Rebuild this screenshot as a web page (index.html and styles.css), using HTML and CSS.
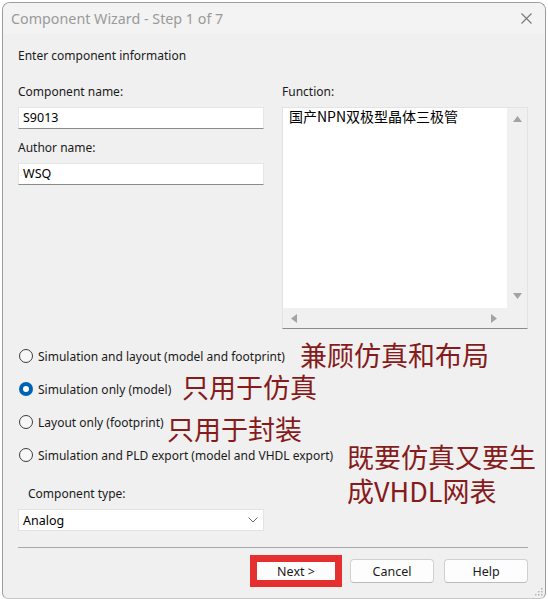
FILE: index.html
```html
<!DOCTYPE html>
<html>
<head>
<meta charset="utf-8">
<link rel="stylesheet" href="styles.css">
</head>
<body>
<div class="window">
  <div class="titlebar">
    <span class="title">Component Wizard - Step 1 of 7</span>
    <svg class="close" width="11" height="11" viewBox="0 0 11 11"><path d="M0.5 0.5 L10.5 10.5 M10.5 0.5 L0.5 10.5" stroke="#777" stroke-width="1.1" fill="none"/></svg>
  </div>
  <div class="content">
    <div class="intro">Enter component information</div>
    <div class="cols">
      <div class="col">
        <div class="label">Component name:</div>
        <div class="input">S9013</div>
        <div class="label second">Author name:</div>
        <div class="input">WSQ</div>
      </div>
      <div class="col">
        <div class="label">Function:</div>
        <div class="textarea">
          <div class="ta-main">
            <div class="ta-text">国产NPN双极型晶体三极管</div>
            <div class="vscroll">
              <svg width="9" height="6" viewBox="0 0 9 6"><path d="M0 6 L4.5 0 L9 6 Z" fill="#a3a3a3"/></svg>
              <svg width="9" height="6" viewBox="0 0 9 6"><path d="M0 0 L9 0 L4.5 6 Z" fill="#a3a3a3"/></svg>
            </div>
          </div>
          <div class="hscroll">
            <div class="hbar">
              <svg width="6" height="9" viewBox="0 0 6 9"><path d="M6 0 L6 9 L0 4.5 Z" fill="#a3a3a3"/></svg>
              <svg width="6" height="9" viewBox="0 0 6 9"><path d="M0 0 L6 4.5 L0 9 Z" fill="#a3a3a3"/></svg>
            </div>
            <div class="corner"></div>
          </div>
        </div>
      </div>
    </div>
    <div class="options">
      <div class="radio-row"><span class="radio"></span><span>Simulation and layout (model and footprint)</span></div>
      <div class="radio-row"><span class="radio checked"></span><span>Simulation only (model)</span></div>
      <div class="radio-row"><span class="radio"></span><span>Layout only (footprint)</span></div>
      <div class="radio-row"><span class="radio"></span><span>Simulation and PLD export (model and VHDL export)</span></div>
    </div>
    <div class="type-label">Component type:</div>
    <div class="select">
      <span>Analog</span>
      <svg width="10" height="6" viewBox="0 0 10 6"><path d="M0.5 0.5 L5 5 L9.5 0.5" stroke="#666" stroke-width="1" fill="none"/></svg>
    </div>
    <div class="separator"></div>
    <div class="buttons">
      <div class="btn next">Next &gt;</div>
      <div class="btn">Cancel</div>
      <div class="btn">Help</div>
    </div>
  </div>
  <div class="note note1">兼顾仿真和布局</div>
  <div class="note note2">只用于仿真</div>
  <div class="note note3">只用于封装</div>
  <div class="note note4">
    <div class="note-line">既要仿真又要生</div>
    <div class="note-line">成VHDL网表</div>
  </div>
  <svg class="grip" width="8" height="8" viewBox="0 0 8 8"><g fill="#b5b5b5"><rect x="6" y="0" width="1.5" height="1.5"/><rect x="3" y="3" width="1.5" height="1.5"/><rect x="6" y="3" width="1.5" height="1.5"/><rect x="0" y="6" width="1.5" height="1.5"/><rect x="3" y="6" width="1.5" height="1.5"/><rect x="6" y="6" width="1.5" height="1.5"/></g></svg>
</div>
</body>
</html>
```

FILE: styles.css
```css
html, body {
  margin: 0;
  padding: 0;
  background: #ffffff;
}
body {
  font-family: "Noto Sans", "Noto Sans CJK SC", sans-serif;
  font-size: 12px;
  color: #1a1a1a;
}
.window {
  position: relative;
  box-sizing: border-box;
  margin: 2px 0 0 2px;
  width: 544px;
  height: 597px;
  background: #f0f0f0;
  border: 1px solid #9c9c9c;
  border-bottom-color: #c8c8c8;
  border-radius: 8px 8px 6px 6px;
  overflow: hidden;
}
.titlebar {
  height: 31px;
  display: flex;
  align-items: center;
  justify-content: space-between;
  padding: 0 13px 0 8px;
  background: #f3f3f3;
}
.title {
  font-size: 14.3px;
  color: #9a9a9a;
}
.close {
  display: block;
}
.content {
  padding: 14px 16px 0 15px;
}
.intro {
  line-height: 16px;
  height: 16px;
}
.cols {
  display: flex;
  gap: 18px;
  margin-top: 20px;
}
.col {
  width: 246px;
  display: flex;
  flex-direction: column;
}
.label {
  line-height: 16px;
  height: 16px;
  margin-bottom: 7px;
}
.label.second {
  margin-top: 11px;
}
.input {
  box-sizing: border-box;
  height: 22px;
  background: #ffffff;
  border: 1px solid #e6e6e6;
  border-bottom: 1px solid #8c8c8c;
  padding: 0 4px;
  line-height: 20px;
  font-size: 12.5px;
  color: #000;
}
.textarea {
  box-sizing: border-box;
  height: 222px;
  display: flex;
  flex-direction: column;
  border: 1px solid #e3e3e3;
  border-bottom: 1px solid #8c8c8c;
  background: #f0f0f0;
}
.ta-main {
  flex: 1;
  display: flex;
}
.ta-text {
  flex: 1;
  background: #ffffff;
  padding: 0 6px;
  font-family: "Noto Sans CJK SC", sans-serif;
  font-size: 14px;
  line-height: 17px;
  color: #000;
}
.vscroll {
  width: 20px;
  display: flex;
  flex-direction: column;
  justify-content: space-between;
  align-items: center;
  padding: 8px 0 9px;
  background: #f0f0f0;
}
.vscroll svg, .hbar svg {
  display: block;
}
.hscroll {
  height: 20px;
  display: flex;
}
.hbar {
  flex: 1;
  display: flex;
  justify-content: space-between;
  align-items: center;
  padding: 0 10px 0 8px;
}
.corner {
  width: 20px;
}
.options {
  margin-top: 17px;
  display: flex;
  flex-direction: column;
  gap: 13px;
}
.radio-row {
  height: 20px;
  display: flex;
  align-items: center;
  gap: 5px;
}
.radio {
  box-sizing: border-box;
  width: 14px;
  height: 14px;
  border-radius: 50%;
  border: 1px solid #3c3c3c;
  background: #f7f7f7;
  margin-left: 1px;
  position: relative;
}
.radio.checked {
  border: none;
  background: #0063b1;
}
.radio.checked::after {
  content: "";
  position: absolute;
  left: 4px;
  top: 4px;
  width: 6px;
  height: 6px;
  border-radius: 50%;
  background: #ffffff;
}
.type-label {
  margin: 21px 0 7px 10px;
  line-height: 16px;
  height: 16px;
}
.select {
  box-sizing: border-box;
  width: 246px;
  height: 22px;
  background: #ffffff;
  border: 1px solid #e3e3e3;
  display: flex;
  align-items: center;
  justify-content: space-between;
  padding: 0 5px 0 4px;
  font-size: 12.5px;
  color: #000;
}
.select svg {
  display: block;
}
.separator {
  margin-top: 16px;
  height: 1px;
  background: #a9a9a9;
  width: 510px;
}
.buttons {
  margin-top: 11px;
  display: flex;
  justify-content: flex-end;
  gap: 10px;
  width: 510px;
}
.btn {
  box-sizing: border-box;
  width: 84px;
  height: 24px;
  background: #fdfdfd;
  border: 1px solid #d0d0d0;
  border-bottom-color: #bcbcbc;
  border-radius: 4px;
  display: flex;
  align-items: center;
  justify-content: center;
  font-size: 12.5px;
  color: #1a1a1a;
}
.btn.next {
  border: 3px solid #e4312f;
  border-radius: 0;
  outline: 4px solid #e4312f;
  margin-right: 2px;
}
.note {
  position: absolute;
  font-family: "Noto Sans CJK SC", sans-serif;
  font-size: 27px;
  font-weight: 400;
  color: #861b1b;
  line-height: 30px;
  white-space: nowrap;
}
.note1 { left: 297px; top: 337px; }
.note2 { left: 179px; top: 369px; }
.note3 { left: 164px; top: 411px; }
.note4 {
  left: 344px;
  top: 439px;
  display: flex;
  flex-direction: column;
  gap: 4px;
}
.note-line {
  height: 30px;
  line-height: 30px;
}
.grip {
  position: absolute;
  right: 2px;
  bottom: 2px;
}
```
